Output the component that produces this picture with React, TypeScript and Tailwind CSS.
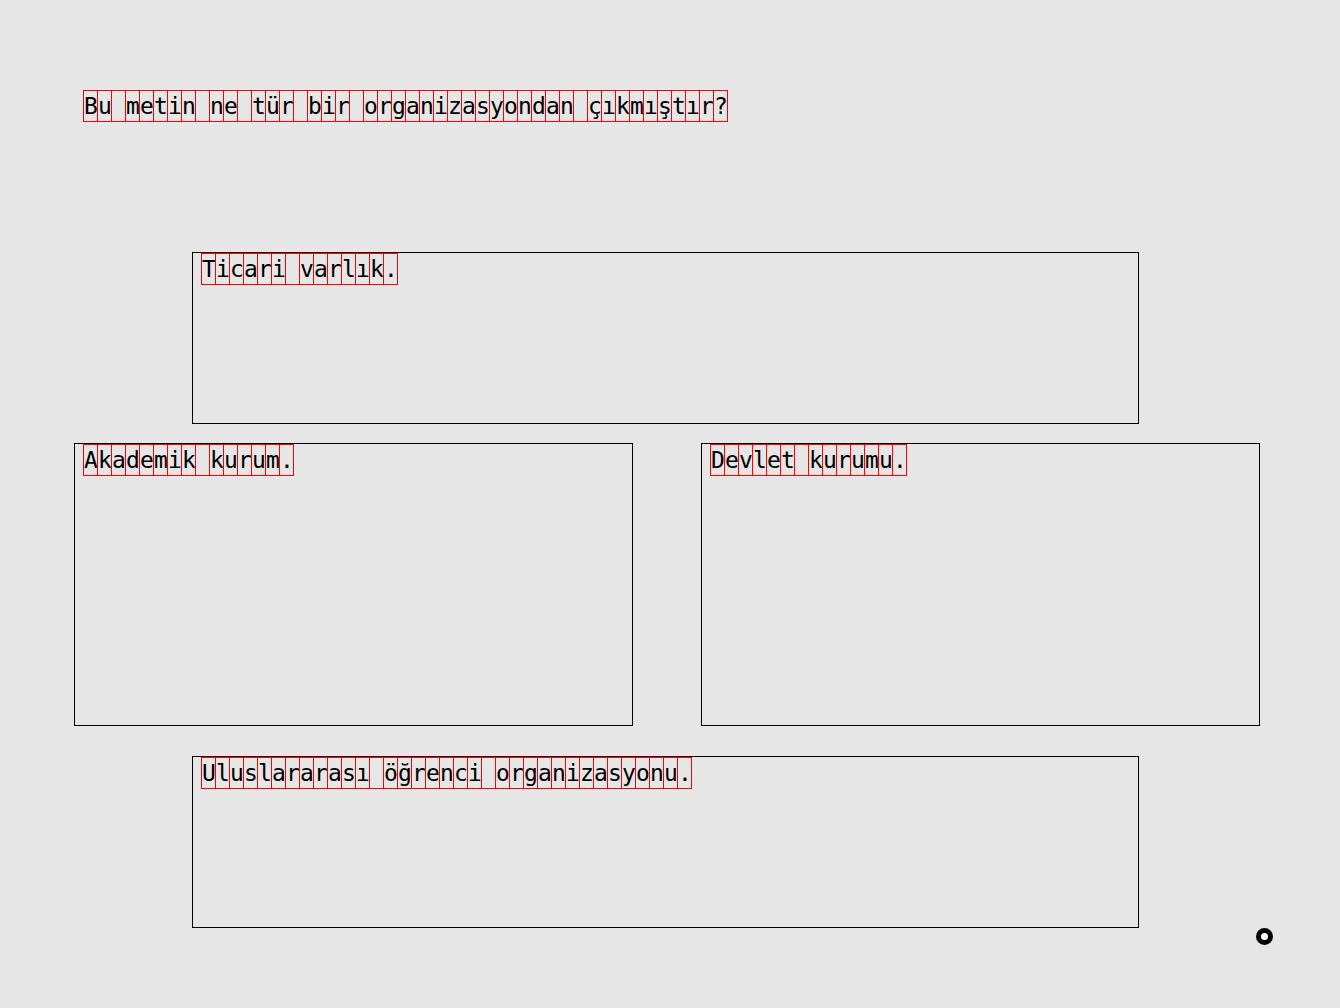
import React from 'react';

function Boxed({ text }: { text: string }) {
  return (
    <div className="flex">
      {Array.from(text).map((ch, i) => (
        <span
          key={i}
          className="block w-[15px] h-[32px] -mr-px border border-[#ff0000] leading-[30px] whitespace-pre text-[23px] text-black"
        >
          {ch}
        </span>
      ))}
    </div>
  );
}

function Card({ text, className }: { text: string; className: string }) {
  return (
    <div className={'border border-black pl-2 ' + className}>
      <Boxed text={text} />
    </div>
  );
}

export default function App() {
  return (
    <div
      className="relative w-full h-[1008px] bg-[#e6e6e6] overflow-hidden pt-[90px]"
      style={{ fontFamily: '"DejaVu Sans Mono", "Liberation Mono", monospace' }}
    >
      <div className="ml-[83px]">
        <Boxed text="Bu metin ne tür bir organizasyondan çıkmıştır?" />
      </div>

      <Card text="Ticari varlık." className="mt-[130px] ml-[192px] w-[947px] h-[172px]" />

      <div className="flex mt-[19px] ml-[74px] gap-[68px]">
        <Card text="Akademik kurum." className="w-[559px] h-[283px]" />
        <Card text="Devlet kurumu." className="w-[559px] h-[283px]" />
      </div>

      <Card text="Uluslararası öğrenci organizasyonu." className="mt-[30px] ml-[192px] w-[947px] h-[172px]" />

      <div className="absolute left-[1256px] top-[928px] w-[17px] h-[17px] rounded-full border-[5px] border-black bg-white" />
    </div>
  );
}
